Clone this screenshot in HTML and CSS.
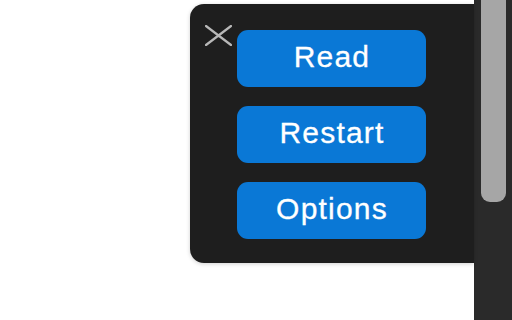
FILE: index.html
```html
<!DOCTYPE html>
<html lang="en">
<head>
    <meta charset="UTF-8">
    <meta name="viewport" content="width=device-width, initial-scale=1.0">
    <title>Reader Popup</title>
    <link rel="stylesheet" href="styles.css">
</head>
<body>

    <div class="page">
        <div class="popup">
            <button class="close" aria-label="Close">
                <svg width="27" height="21" viewBox="0 0 27 21">
                    <path d="M1 1 L26 20 M1 20 L26 1" stroke="#b8b8b8" stroke-width="2.2" stroke-linecap="round" fill="none"/>
                </svg>
            </button>
            <div class="actions">
                <button class="btn">Read</button>
                <button class="btn">Restart</button>
                <button class="btn">Options</button>
            </div>
        </div>
    </div>

    <div class="scrollbar">
        <div class="thumb"></div>
    </div>

</body>
</html>
```

FILE: styles.css
```css
/* General Reset */
* {
    margin: 0;
    padding: 0;
    box-sizing: border-box;
}

/* Body Styles */
body {
    font-family: 'Liberation Sans', Arial, sans-serif;
    background-color: #fff;
    width: 512px;
    height: 320px;
    overflow: hidden;
    display: flex;
}

/* Page Area */
.page {
    flex: 1;
    display: flex;
    justify-content: flex-end;
    align-items: flex-start;
}

/* Popup Panel */
.popup {
    position: relative;
    margin-top: 4px;
    width: 284px;
    height: 259px;
    background-color: #1e1e1e;
    border-radius: 14px 0 0 14px;
    box-shadow: 0 1px 4px rgba(0, 0, 0, 0.18);
    padding: 26px 48px 0 47px;
}

.close {
    position: absolute;
    left: 15px;
    top: 21px;
    background: none;
    border: none;
    display: block;
    line-height: 0;
    cursor: pointer;
}

.actions {
    display: flex;
    flex-direction: column;
    gap: 19px;
}

/* Buttons */
.btn {
    height: 57px;
    width: 189px;
    padding-bottom: 3px;
    background-color: #0a78d6;
    color: #fff;
    border: none;
    border-radius: 11px;
    font-family: 'Liberation Sans', Arial, sans-serif;
    font-size: 30px;
    letter-spacing: 1.2px;
    text-indent: 1px;
    -webkit-text-stroke: 0.3px #fff;
    cursor: pointer;
}

/* Scrollbar */
.scrollbar {
    width: 38px;
    height: 320px;
    background-color: #2a2a2a;
    padding-left: 7px;
    padding-right: 6px;
}

.thumb {
    height: 202px;
    background-color: #a6a6a6;
    border-radius: 0 0 9px 9px;
}
```
